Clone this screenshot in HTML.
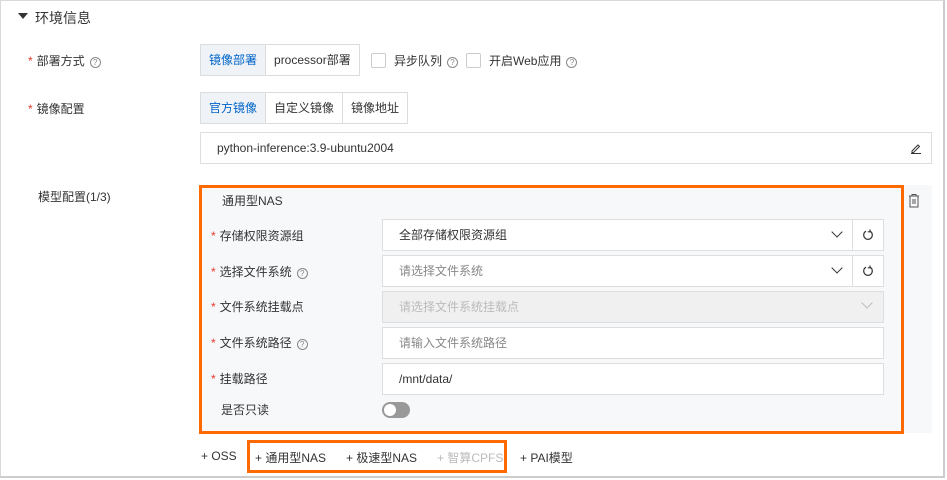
<!DOCTYPE html>
<html><head><meta charset="utf-8"><style>
*{box-sizing:border-box;margin:0;padding:0}
body{width:947px;height:480px;background:#fff;font-family:"Liberation Sans","Noto Sans CJK SC",sans-serif;font-size:12px;color:#333;position:relative;overflow:hidden}
.frame{position:absolute;left:0;top:0;width:945px;height:478px;border:1px solid #d9d9d9;border-right:2px solid #ccc;border-bottom:2px solid #ccc}
.abs{position:absolute}
.lbl{position:absolute;font-size:12px;color:#333;line-height:16px}
.star{color:#e5382c;margin-right:4px}
.q{display:inline-block;width:11px;height:11px;border:1px solid #888;border-radius:50%;font-size:8px;line-height:9px;text-align:center;color:#888;margin-left:5px;vertical-align:0px}
.seg{position:absolute;height:32px;border:1px solid #dcdcdc;display:flex}
.seg div{padding:0 8px;line-height:30px;border-right:1px solid #dcdcdc;white-space:nowrap}
.seg div:last-child{border-right:none}
.seg .on{background:#eff3f8;color:#0064c8}
.cb{position:absolute;width:15px;height:15px;border:1px solid #ccc;border-radius:2px;background:#fff}
.inp{position:absolute;height:32px;border:1px solid #dedede;background:#fff;line-height:30px;padding-left:16px;color:#333}
.ph{color:#888}
.chev{position:absolute;width:8px;height:8px;border-right:1.2px solid #333;border-bottom:1.2px solid #333;transform:rotate(45deg)}
</style></head><body>
<div class="frame"></div>
<div class="abs" style="left:18px;top:13px;width:0;height:0;border-left:5px solid transparent;border-right:5px solid transparent;border-top:6px solid #333"></div>
<div class="abs" style="left:35px;top:8px;font-size:14px;color:#333">环境信息</div>

<div class="lbl" style="left:28px;top:53px"><span class="star">*</span>部署方式<span class="q">?</span></div>
<div class="seg" style="left:200px;top:44px"><div class="on">镜像部署</div><div>processor部署</div></div>
<div class="cb" style="left:371px;top:53px"></div>
<div class="lbl" style="left:394px;top:53px">异步队列<span class="q">?</span></div>
<div class="cb" style="left:466px;top:53px"></div>
<div class="lbl" style="left:489px;top:53px">开启Web应用<span class="q">?</span></div>

<div class="lbl" style="left:28px;top:101px"><span class="star">*</span>镜像配置</div>
<div class="seg" style="left:200px;top:92px"><div class="on">官方镜像</div><div>自定义镜像</div><div>镜像地址</div></div>
<div class="inp" style="left:200px;top:132px;width:732px">python-inference:3.9-ubuntu2004</div>
<svg class="abs" style="left:910px;top:142px" width="12" height="12" viewBox="0 0 12 12"><path d="M2 9 L8 3 L9.5 4.5 L3.5 10.5 L2 10.5Z M1 11.5H11" fill="none" stroke="#333" stroke-width="1"/></svg>

<div class="lbl" style="left:38px;top:189px">模型配置(1/3)</div>
<div class="abs" style="left:200px;top:185px;width:732px;height:248px;background:#f7f8fa"></div>
<div class="abs" style="left:199px;top:185px;width:705px;height:249px;border:3px solid #ff6a00"></div>
<svg class="abs" style="left:908px;top:193px" width="12" height="15" viewBox="0 0 12 15"><path d="M1 3H11M4 3V1.5H8V3M2 3V14H10V3M5 6V11M7 6V11" fill="none" stroke="#555" stroke-width="1"/></svg>
<div class="lbl" style="left:222px;top:193px">通用型NAS</div>

<div class="lbl" style="left:211px;top:228px"><span class="star">*</span>存储权限资源组</div>
<div class="inp" style="left:382px;top:219px;width:471px">全部存储权限资源组</div>
<div class="chev" style="left:833px;top:228px"></div>
<div class="inp" style="left:852px;top:219px;width:32px"></div>
<svg class="abs" style="left:862px;top:229px" width="12" height="12" viewBox="0 0 12 12"><path d="M4 2.2A4.3 4.3 0 1 0 8 2.2M8 0.5V2.8H5.8" fill="none" stroke="#333" stroke-width="1.2"/></svg>

<div class="lbl" style="left:211px;top:264px"><span class="star">*</span>选择文件系统<span class="q">?</span></div>
<div class="inp ph" style="left:382px;top:255px;width:471px">请选择文件系统</div>
<div class="chev" style="left:833px;top:264px"></div>
<div class="inp" style="left:852px;top:255px;width:32px"></div>
<svg class="abs" style="left:862px;top:265px" width="12" height="12" viewBox="0 0 12 12"><path d="M4 2.2A4.3 4.3 0 1 0 8 2.2M8 0.5V2.8H5.8" fill="none" stroke="#333" stroke-width="1.2"/></svg>

<div class="lbl" style="left:211px;top:299px"><span class="star">*</span>文件系统挂载点</div>
<div class="inp" style="left:382px;top:291px;width:502px;background:#f0f0f0;color:#bbb">请选择文件系统挂载点</div>
<div class="abs" style="left:863px;top:299px;width:8px;height:8px;border-right:1px solid #bbb;border-bottom:1px solid #bbb;transform:rotate(45deg)"></div>

<div class="lbl" style="left:211px;top:335px"><span class="star">*</span>文件系统路径<span class="q">?</span></div>
<div class="inp ph" style="left:382px;top:327px;width:502px">请输入文件系统路径</div>

<div class="lbl" style="left:211px;top:371px"><span class="star">*</span>挂载路径</div>
<div class="inp" style="left:382px;top:363px;width:502px">/mnt/data/</div>

<div class="lbl" style="left:221px;top:402px">是否只读</div>
<div class="abs" style="left:382px;top:402px;width:28px;height:16px;border-radius:8px;background:#999"></div>
<div class="abs" style="left:384px;top:404px;width:12px;height:12px;border-radius:50%;background:#fff"></div>

<div class="abs" style="left:201px;top:449px;font-size:12px;color:#333">+ OSS</div>
<div class="abs" style="left:247px;top:440px;width:260px;height:33px;border:3px solid #ff6a00"></div>
<div class="abs" style="left:255px;top:449px;color:#333">+ 通用型NAS</div>
<div class="abs" style="left:346px;top:449px;color:#333">+ 极速型NAS</div>
<div class="abs" style="left:437px;top:449px;color:#bbb">+ 智算CPFS</div>
<div class="abs" style="left:520px;top:449px;color:#333">+ PAI模型</div>
</body></html>
